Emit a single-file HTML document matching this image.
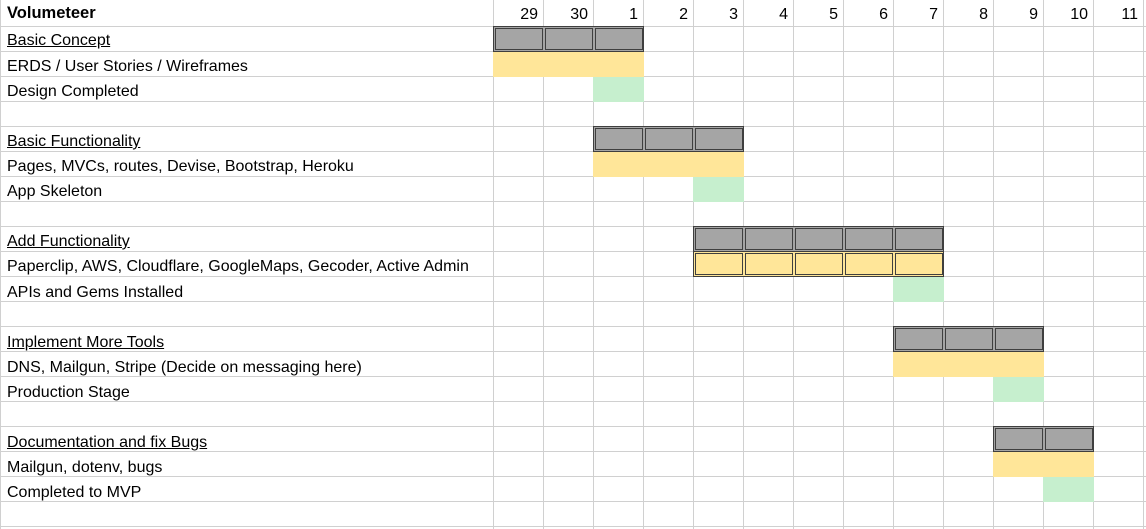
<!DOCTYPE html>
<html><head><meta charset="utf-8"><style>
html,body{margin:0;padding:0;background:#fff;}
body{width:1146px;height:529px;position:relative;overflow:hidden;font-family:"Liberation Sans",Arial,sans-serif;font-size:16px;color:#000;}
.h{position:absolute;left:0;top:1px;width:1146px;height:528px;background:repeating-linear-gradient(to bottom,#d0d0d0 0 1px,transparent 1px 25px);background-position:0 0;}
.v{position:absolute;left:493px;top:0;width:653px;height:529px;background:repeating-linear-gradient(to right,#d0d0d0 0 1px,transparent 1px 50px);}
.l0{position:absolute;left:0;top:0;width:1px;height:529px;background:#d0d0d0}
.t{position:absolute;left:7px;height:25px;line-height:27px;white-space:nowrap}
.u{text-decoration:underline}
.n{position:absolute;top:0;height:26px;line-height:29px;width:45px;text-align:right}
.y{position:absolute;background:#ffe699;height:25px}
.g{position:absolute;background:#c6efce;height:25px}
.bar{position:absolute;height:26px;box-sizing:border-box;border:1px solid #3f3f3f;background:#a5a5a5}
.bar.yl{background:#ffe699}
.bar i{position:absolute;top:1px;height:22px;width:48px;box-sizing:border-box;border:1px solid #3f3f3f}
</style></head><body>
<div class="h"></div>
<div class="v"></div>
<div class="l0"></div>
<div style="position:absolute;left:0;top:0;width:1146px;height:26px;background:#fff"></div>
<div style="position:absolute;left:0;top:26px;width:1146px;height:1px;background:#d0d0d0"></div>
<div style="position:absolute;left:0;top:0;width:1px;height:26px;background:#d0d0d0"></div>
<div style="position:absolute;left:493px;top:0;width:653px;height:26px;background:repeating-linear-gradient(to right,#d0d0d0 0 1px,transparent 1px 50px)"></div>

<div class="t" style="top:0px;font-weight:bold;font-size:16.5px">Volumeteer</div>
<div class="n" style="left:493px">29</div>
<div class="n" style="left:543px">30</div>
<div class="n" style="left:593px">1</div>
<div class="n" style="left:643px">2</div>
<div class="n" style="left:693px">3</div>
<div class="n" style="left:743px">4</div>
<div class="n" style="left:793px">5</div>
<div class="n" style="left:843px">6</div>
<div class="n" style="left:893px">7</div>
<div class="n" style="left:943px">8</div>
<div class="n" style="left:993px">9</div>
<div class="n" style="left:1043px">10</div>
<div class="n" style="left:1093px">11</div>

<div class="y" style="left:493px;top:52px;width:151px"></div>
<div class="g" style="left:593px;top:77px;width:51px"></div>
<div class="y" style="left:593px;top:152px;width:151px"></div>
<div class="g" style="left:693px;top:177px;width:51px"></div>
<div class="g" style="left:893px;top:277px;width:51px"></div>
<div class="y" style="left:893px;top:352px;width:151px"></div>
<div class="g" style="left:993px;top:377px;width:51px"></div>
<div class="y" style="left:993px;top:452px;width:101px"></div>
<div class="g" style="left:1043px;top:477px;width:51px"></div>

<div class="bar" style="left:493px;top:26px;width:151px"><i style="left:1px"></i><i style="left:51px"></i><i style="left:101px"></i></div>
<div class="bar" style="left:593px;top:126px;width:151px"><i style="left:1px"></i><i style="left:51px"></i><i style="left:101px"></i></div>
<div class="bar" style="left:693px;top:226px;width:251px"><i style="left:1px"></i><i style="left:51px"></i><i style="left:101px"></i><i style="left:151px"></i><i style="left:201px"></i></div>
<div class="bar yl" style="left:693px;top:251px;width:251px"><i style="left:1px"></i><i style="left:51px"></i><i style="left:101px"></i><i style="left:151px"></i><i style="left:201px"></i></div>
<div class="bar" style="left:893px;top:326px;width:151px"><i style="left:1px"></i><i style="left:51px"></i><i style="left:101px"></i></div>
<div class="bar" style="left:993px;top:426px;width:101px"><i style="left:1px"></i><i style="left:51px"></i></div>

<div class="t u" style="top:27px">Basic Concept</div>
<div class="t" style="top:53px">ERDS / User Stories / Wireframes</div>
<div class="t" style="top:78px">Design Completed</div>
<div class="t u" style="top:128px">Basic Functionality</div>
<div class="t" style="top:153px">Pages, MVCs, routes, Devise, Bootstrap, Heroku</div>
<div class="t" style="top:178px">App Skeleton</div>
<div class="t u" style="top:228px">Add Functionality</div>
<div class="t" style="top:253px">Paperclip, AWS, Cloudflare, GoogleMaps, Gecoder, Active Admin</div>
<div class="t" style="top:279px">APIs and Gems Installed</div>
<div class="t u" style="top:329px">Implement More Tools</div>
<div class="t" style="top:354px">DNS, Mailgun, Stripe (Decide on messaging here)</div>
<div class="t" style="top:379px">Production Stage</div>
<div class="t u" style="top:429px">Documentation and fix Bugs</div>
<div class="t" style="top:454px">Mailgun, dotenv, bugs</div>
<div class="t" style="top:479px">Completed to MVP</div>
</body></html>
